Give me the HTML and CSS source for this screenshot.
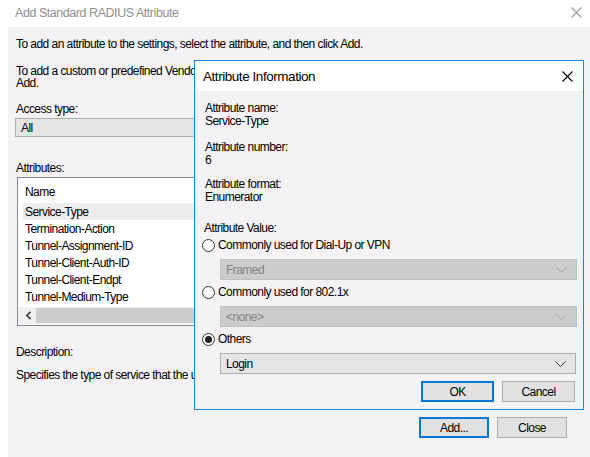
FILE: index.html
```html
<!DOCTYPE html>
<html>
<head>
<meta charset="utf-8">
<title>Add Standard RADIUS Attribute</title>
<link rel="stylesheet" href="styles.css">
</head>
<body>
<div class="screen">
  <div class="titlebar">
    <span class="title">Add Standard RADIUS Attribute</span>
    <svg class="close-x inactive" width="11" height="11" viewBox="0 0 11 11"><path d="M0.5 0.5 L10.5 10.5 M10.5 0.5 L0.5 10.5" stroke="currentColor" stroke-width="1.1" fill="none"/></svg>
  </div>
  <div class="client">
    <p class="text p1">To add an attribute to the settings, select the attribute, and then click Add.</p>
    <p class="text p2">To add a custom or predefined Vendor Specific attribute, close this dialog and select Vendor Specific, and then click<br>Add.</p>
    <p class="text lbl-access">Access type:</p>
    <div class="combo combo-all"><span>All</span></div>
    <p class="text lbl-attrs">Attributes:</p>
    <div class="listbox">
      <div class="lv-header">Name</div>
      <div class="lv-rows">
        <div class="lv-row selected">Service-Type</div>
        <div class="lv-row">Termination-Action</div>
        <div class="lv-row">Tunnel-Assignment-ID</div>
        <div class="lv-row">Tunnel-Client-Auth-ID</div>
        <div class="lv-row">Tunnel-Client-Endpt</div>
        <div class="lv-row">Tunnel-Medium-Type</div>
      </div>
      <div class="hscroll">
        <svg class="sb-arrow" width="7" height="9" viewBox="0 0 7 9"><path d="M5.5 0.8 L1.8 4.5 L5.5 8.2" stroke="#404040" stroke-width="1.7" fill="none"/></svg>
        <div class="sb-thumb"></div>
      </div>
    </div>
    <p class="text lbl-desc">Description:</p>
    <p class="text desc">Specifies the type of service that the user has requested.</p>
    <div class="button-row main-buttons">
      <div class="btn default">Add...</div>
      <div class="btn">Close</div>
    </div>
  </div>

  <div class="dialog">
    <div class="dlg-titlebar">
      <span class="dlg-title">Attribute Information</span>
      <svg class="close-x" width="11" height="11" viewBox="0 0 11 11"><path d="M0.5 0.5 L10.5 10.5 M10.5 0.5 L0.5 10.5" stroke="currentColor" stroke-width="1.1" fill="none"/></svg>
    </div>
    <div class="dlg-body">
      <div class="info info-name">
        <p class="text">Attribute name:</p>
        <p class="text">Service-Type</p>
      </div>
      <div class="info info-number">
        <p class="text">Attribute number:</p>
        <p class="text">6</p>
      </div>
      <div class="info info-format">
        <p class="text">Attribute format:</p>
        <p class="text">Enumerator</p>
      </div>
      <p class="text lbl-value">Attribute Value:</p>
      <div class="radio-row r1"><span class="radio"></span><span class="text">Commonly used for Dial-Up or VPN</span></div>
      <div class="combo dlg-combo disabled"><span>Framed</span>
        <svg class="chev" width="11" height="6" viewBox="0 0 11 6"><path d="M0.5 0.5 L5.5 5.5 L10.5 0.5" stroke="currentColor" stroke-width="1" fill="none"/></svg>
      </div>
      <div class="radio-row r2"><span class="radio"></span><span class="text">Commonly used for 802.1x</span></div>
      <div class="combo dlg-combo disabled"><span>&lt;none&gt;</span>
        <svg class="chev" width="11" height="6" viewBox="0 0 11 6"><path d="M0.5 0.5 L5.5 5.5 L10.5 0.5" stroke="currentColor" stroke-width="1" fill="none"/></svg>
      </div>
      <div class="radio-row r3"><span class="radio checked"></span><span class="text">Others</span></div>
      <div class="combo dlg-combo login"><span>Login</span>
        <svg class="chev" width="11" height="6" viewBox="0 0 11 6"><path d="M0.5 0.5 L5.5 5.5 L10.5 0.5" stroke="currentColor" stroke-width="1" fill="none"/></svg>
      </div>
      <div class="button-row dlg-buttons">
        <div class="btn default dlg-btn">OK</div>
        <div class="btn dlg-btn">Cancel</div>
      </div>
    </div>
  </div>
</div>
</body>
</html>
```
FILE: styles.css
```css
* { box-sizing: border-box; }
html, body { margin: 0; padding: 0; background: #ffffff; }
body {
  font-family: "Liberation Sans", Arial, sans-serif;
  font-size: 12px;
  letter-spacing: -0.55px;
  color: #000;
}
.screen {
  position: relative;
  width: 590px;
  height: 457px;
  overflow: hidden;
  display: flex;
  flex-direction: column;
}
p { margin: 0; }
.text { line-height: 13px; white-space: nowrap; }

/* main window title bar */
.titlebar {
  height: 27px;
  flex: none;
  display: flex;
  align-items: center;
  justify-content: space-between;
  padding: 0 8px 2px 15px;
}
.title { color: #8f8f8f; font-size: 12.5px; letter-spacing: -0.45px; }
.close-x { display: block; color: #000; }
.close-x.inactive { color: #9a9a9a; }

/* client area */
.client {
  flex: 1;
  margin-left: 8px;
  background: #f5f2f5;
  padding: 11px 23px 0 8px;
  display: flex;
  flex-direction: column;
}
.p2 { margin-top: 14px; line-height: 12px; }
.lbl-access { margin-top: 14px; }
.combo {
  height: 19px;
  border: 1px solid #adadad;
  background: #e5e5e5;
  display: flex;
  align-items: center;
  justify-content: space-between;
  padding: 0 9px 0 5px;
  color: #000;
}
.combo-all { margin-top: 2px; margin-left: -1px; width: 560px; }
.lbl-attrs { margin-top: 25px; }
.listbox {
  margin-top: 2px;
  margin-left: 1px;
  width: 558px;
  height: 149px;
  border: 1px solid #828790;
  background: #ffffff;
  display: flex;
  flex-direction: column;
}
.lv-header {
  height: 25px;
  display: flex;
  align-items: center;
  padding: 2px 0 0 7px;
}
.lv-rows { padding-left: 5px; }
.lv-row {
  height: 17px;
  line-height: 17px;
  padding: 1px 0 0 2px;
  line-height: 16px;
  white-space: nowrap;
}
.lv-row.selected { background: #ededed; }
.hscroll {
  margin-top: 2px;
  height: 17px;
  background: #f0f0f0;
  display: flex;
  align-items: center;
}
.sb-arrow { display: block; margin-left: 7px; margin-right: 4px; }
.sb-thumb { flex: 1; height: 15px; background: #cdcdcd; }
.lbl-desc { margin-top: 20px; }
.desc { margin-top: 10px; }

.button-row { display: flex; justify-content: flex-end; gap: 8px; }
.main-buttons { margin-top: 35px; }
.btn {
  width: 70px;
  height: 21px;
  border: 1px solid #adadad;
  background: #e1e1e1;
  display: flex;
  align-items: center;
  justify-content: center;
  color: #000;
  padding-top: 1px;
}
.btn.default { border: 2px solid #0078d7; }

/* Attribute Information dialog (overlaps the main window) */
.dialog {
  position: absolute;
  left: 194px;
  top: 60px;
  width: 390px;
  height: 350px;
  border: 1px solid #1a84d8;
  background: #f5f2f5;
  display: flex;
  flex-direction: column;
}
.dlg-titlebar {
  height: 30px;
  flex: none;
  background: #ffffff;
  display: flex;
  align-items: center;
  justify-content: space-between;
  padding: 0 10px 0 8px;
}
.dlg-title { font-size: 13.5px; letter-spacing: -0.45px; }
.dlg-body {
  flex: 1;
  padding: 11px 8px 0 7px;
  display: flex;
  flex-direction: column;
}
.info { padding-left: 3px; }
.info-number { margin-top: 13px; }
.info-format { margin-top: 11px; }
.lbl-value { margin-top: 18px; padding-left: 2px; }
.radio-row {
  height: 13px;
  display: flex;
  align-items: center;
  gap: 3px;
}
.r1 { margin-top: 4px; }
.r2, .r3 { margin-top: 6px; }
.radio {
  width: 13px;
  height: 13px;
  flex: none;
  border: 1px solid #333333;
  border-radius: 50%;
  background: #ffffff;
  display: flex;
  align-items: center;
  justify-content: center;
}
.radio.checked::after {
  content: "";
  width: 7px;
  height: 7px;
  border-radius: 50%;
  background: #222222;
}
.dlg-combo {
  margin-top: 7px;
  margin-left: 18px;
  width: 357px;
  height: 21px;
}
.dlg-combo.disabled { background: #cccccc; border-color: #bfbfbf; color: #838383; }
.dlg-combo.disabled .chev { color: #a6a6a6; }
.dlg-combo.login { width: 356px; }
.dlg-combo.login .chev { color: #333333; }
.chev { display: block; }
.dlg-buttons { margin-top: 7px; }
.dlg-btn { width: 73px; }
```
